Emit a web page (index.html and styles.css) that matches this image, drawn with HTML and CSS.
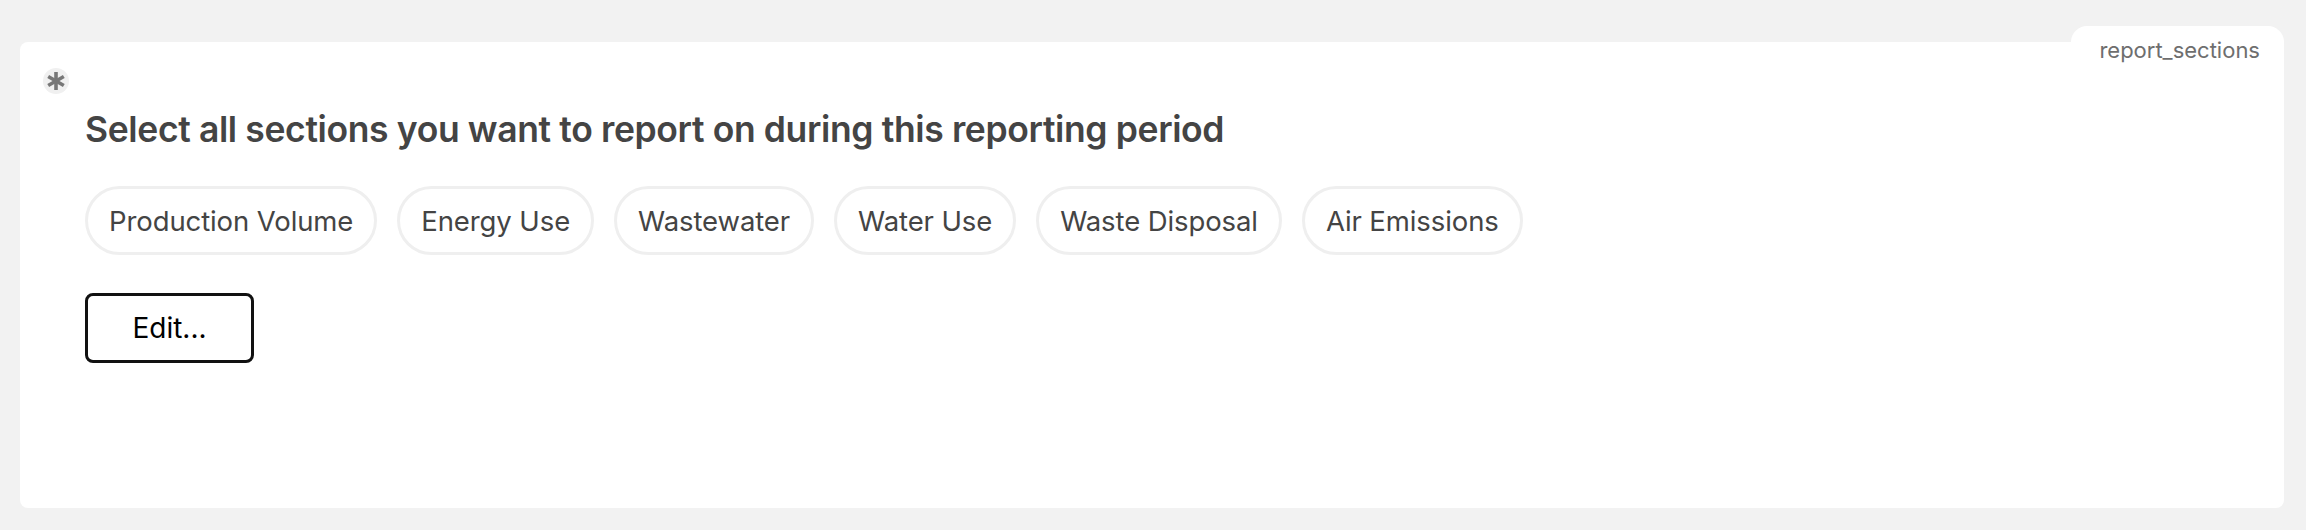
FILE: index.html
```html
<!DOCTYPE html>
<html lang="en">
<head>
<meta charset="utf-8">
<title>report_sections</title>
<link rel="stylesheet" href="styles.css">
</head>
<body>
<div class="card">
  <div class="tab">report_sections</div>
  <div class="required">
    <svg viewBox="0 0 26 26" width="26" height="26" aria-hidden="true">
      <g stroke="#777777" stroke-width="3.6" stroke-linecap="butt">
        <line x1="13" y1="4" x2="13" y2="22"/>
        <line x1="5.2" y1="8.5" x2="20.8" y2="17.5"/>
        <line x1="5.2" y1="17.5" x2="20.8" y2="8.5"/>
      </g>
    </svg>
  </div>
  <h1 class="question">Select all sections you want to report on during this reporting period</h1>
  <div class="pills">
    <span class="pill">Production Volume</span>
    <span class="pill">Energy Use</span>
    <span class="pill">Wastewater</span>
    <span class="pill">Water Use</span>
    <span class="pill">Waste Disposal</span>
    <span class="pill">Air Emissions</span>
  </div>
  <button class="edit" type="button">Edit...</button>
</div>
</body>
</html>
```

FILE: styles.css
```css
html, body {
  margin: 0;
  padding: 0;
  background: #f2f2f2;
  font-family: Inter, "Liberation Sans", sans-serif;
}

body {
  padding: 42px 22px 0 20px;
}

.card {
  position: relative;
  background: #ffffff;
  border-radius: 8px;
  height: 466px;
  box-sizing: border-box;
  padding: 66px 0 0 65px;
}

.tab {
  position: absolute;
  top: -16px;
  right: 0;
  width: 213px;
  height: 60px;
  box-sizing: border-box;
  background: #ffffff;
  border-radius: 16px 16px 0 0;
  color: #6e6e6e;
  font-size: 22px;
  line-height: 26px;
  padding: 11px 24px 0 0;
  text-align: right;
}

.required {
  position: absolute;
  left: 23px;
  top: 26px;
  width: 26px;
  height: 26px;
  border-radius: 50%;
  background: #f0f0f0;
}

.required svg {
  display: block;
}

.question {
  margin: 0;
  font-size: 35.5px;
  line-height: 43px;
  font-weight: 600;
  color: #444444;
  letter-spacing: -0.37px;
}

.pills {
  display: flex;
  gap: 20px;
  margin-top: 35px;
}

.pill {
  display: inline-flex;
  align-items: center;
  height: 69px;
  box-sizing: border-box;
  padding: 0 21px;
  border: 3px solid #efefef;
  border-radius: 35px;
  color: #444444;
  font-size: 27.5px;
  letter-spacing: -0.1px;
}

.edit {
  display: block;
  margin-top: 38px;
  width: 169px;
  height: 70px;
  box-sizing: border-box;
  background: #ffffff;
  border: 3px solid #111111;
  border-radius: 8px;
  color: #000000;
  font-family: Inter, "Liberation Sans", sans-serif;
  font-size: 28px;
  padding: 0;
}
```
